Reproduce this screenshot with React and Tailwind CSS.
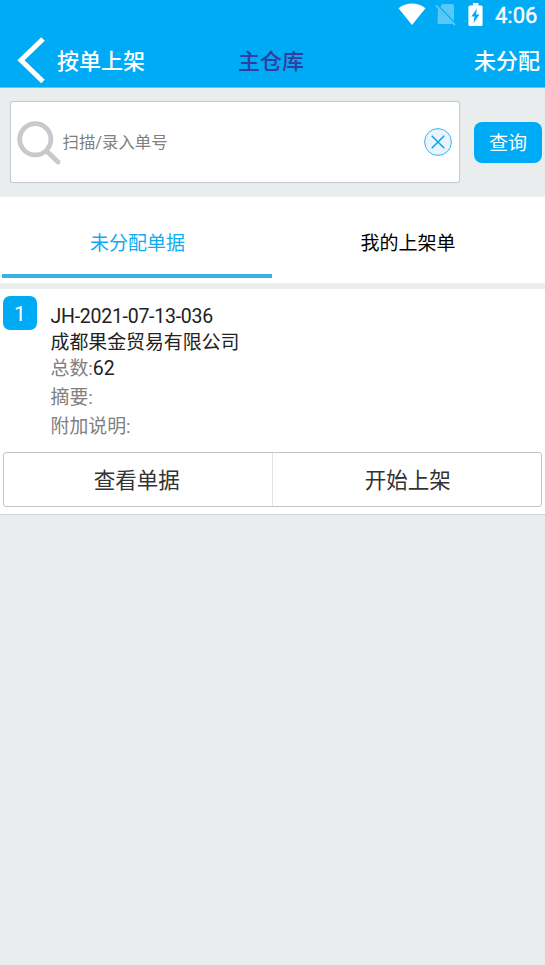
import React from "react";

function StatusBar() {
  return (
    <div className="flex h-[32px] items-start justify-end text-white">
      <svg className="mr-[9px] mt-[3px]" width="28" height="23" viewBox="0 0 28 23">
        <path d="M0.5 5.3C8-1.2 20-1.2 27.5 5.3L14 22Z" fill="currentColor" />
      </svg>
      <svg className="mr-[12px] mt-[3px]" width="21" height="23" viewBox="0 0 21 23" opacity="0.35">
        <path d="M7 1H17Q19 1 19 3V18L5.5 4Z M3 6L18 21H4Q2.500 21 2.500 19.500Z" fill="currentColor" />
        <path d="M1 2.500L20 22" stroke="currentColor" strokeWidth="1.800" />
      </svg>
      <svg className="mr-[12px] mt-[3px]" width="15" height="23" viewBox="0 0 15 23">
        <path d="M5 0H10.500V2.500H13.500Q14.600 2.500 14.600 4V21.500Q14.600 23 13 23H2Q0.400 23 0.400 21.500V4Q0.400 2.500 2 2.500H5Z" fill="currentColor" />
        <path d="M9 5.500L3.300 13.500H6.500L5.500 20L11.500 11.500H8Z" fill="#00abf6" />
      </svg>
      <span className="mr-[7px] mt-[3px] w-[43px] whitespace-nowrap text-[22px] leading-[25px] [-webkit-text-stroke:0.4px_white]">4:06</span>
    </div>
  );
}

function Header() {
  return (
    <header className="h-[88px] border-b border-[#62c7f2] bg-[#00abf6]">
      <StatusBar />
      <div className="grid h-[55px] grid-cols-3 items-center text-[22px] font-medium leading-[32px] text-white">
        <div className="flex items-center pl-[17px]">
          <svg className="mr-[11px] shrink-0" width="29" height="48" viewBox="0 0 29 48">
            <path d="M26 3L4 24.300L26 45.500" fill="none" stroke="currentColor" strokeWidth="5" />
          </svg>
          <span className="whitespace-nowrap pt-[4px]">按单上架</span>
        </div>
        <span className="pr-[3px] pt-[4px] text-center text-[#303f9f]">主仓库</span>
        <span className="pr-[5px] pt-[4px] text-right">未分配</span>
      </div>
    </header>
  );
}

function SearchBar() {
  return (
    <div className="flex h-[109px] items-center pl-[10px] pr-[3px]">
      <div className="mb-px flex h-[82px] w-[450px] items-center rounded-[3px] border border-[#c9cacf] bg-white pl-[6px] pr-[7px] shadow-[0_0_1px_#c9cacf]">
        <svg className="shrink-0" width="45" height="45" viewBox="0 0 45 45" fill="none" stroke="#c8c8cd">
          <circle cx="18.300" cy="19.300" r="15.600" strokeWidth="4.800" />
          <path d="M29.500 31L41 42" strokeWidth="4.800" strokeLinecap="round" />
        </svg>
        <span className="flex-1 pl-[0.5px] pt-[3px] text-[16.400px] text-[#808080]">扫描/录入单号</span>
        <svg width="28" height="28" viewBox="0 0 28 28">
          <circle cx="14" cy="14" r="13.400" fill="#eaf4fd" stroke="#35b9ee" />
          <path d="M7.700 7.700L20.300 20.300M20.300 7.700L7.700 20.300" stroke="#08a5e8" strokeWidth="1.500" />
        </svg>
      </div>
      <button className="ml-[14px] h-[41px] w-[68px] rounded-[8px] bg-[#00abf6] pt-[3px] text-[19px] text-white">查询</button>
    </div>
  );
}

function Tabs() {
  return (
    <nav className="grid h-[86px] grid-cols-2 bg-white pl-[2px] pr-[3px] text-[19px] text-black">
      <div className="flex h-[81px] items-center justify-center border-b-[4px] border-[#39b3e5] pl-px pt-[18px] text-[#10aaf2]">未分配单据</div>
      <div className="flex h-[81px] items-center justify-center border-b-[4px] border-transparent pl-[2px] pt-[18px]">我的上架单</div>
    </nav>
  );
}

function OrderCard() {
  return (
    <section className="mt-[6px] h-[226px] border-b border-[#d3d6d7] bg-white px-[3px] pt-[7px]">
      <div className="flex h-[156px]">
        <div className="h-[34px] w-[34px] rounded-[7px] bg-[#00abf6] text-center text-[21px] leading-[36px] text-white">1</div>
        <div className="ml-[13.500px] pt-[7px] text-[18.900px] text-[#808080]">
          <div className="h-[27px] text-[19.500px] leading-[28px] tracking-[-0.26px] text-[#222]">JH-2021-07-13-036</div>
          <div className="h-[25px] leading-[26px] text-[#222]">成都果金贸易有限公司</div>
          <div className="h-[29px] leading-[28px]">总数:<span className="text-[19.500px] text-[#222]">62</span></div>
          <div className="h-[29px] leading-[28px]">摘要:</div>
          <div className="h-[29px] leading-[28px]">附加说明:</div>
        </div>
      </div>
      <div className="grid h-[55px] grid-cols-2 rounded-[3px] border border-[#c4c4c4] text-[21.500px] text-[#333]">
        <button className="border-r border-[#e4e4e4] pr-[2px] pt-[4px]">查看单据</button>
        <button className="pl-[2px] pt-[4px]">开始上架</button>
      </div>
    </section>
  );
}

export default function App() {
  return (
    <main className="min-h-screen bg-[#e9edee] font-[Roboto,'Noto_Sans_CJK_SC',sans-serif]">
      <Header />
      <SearchBar />
      <Tabs />
      <OrderCard />
    </main>
  );
}
